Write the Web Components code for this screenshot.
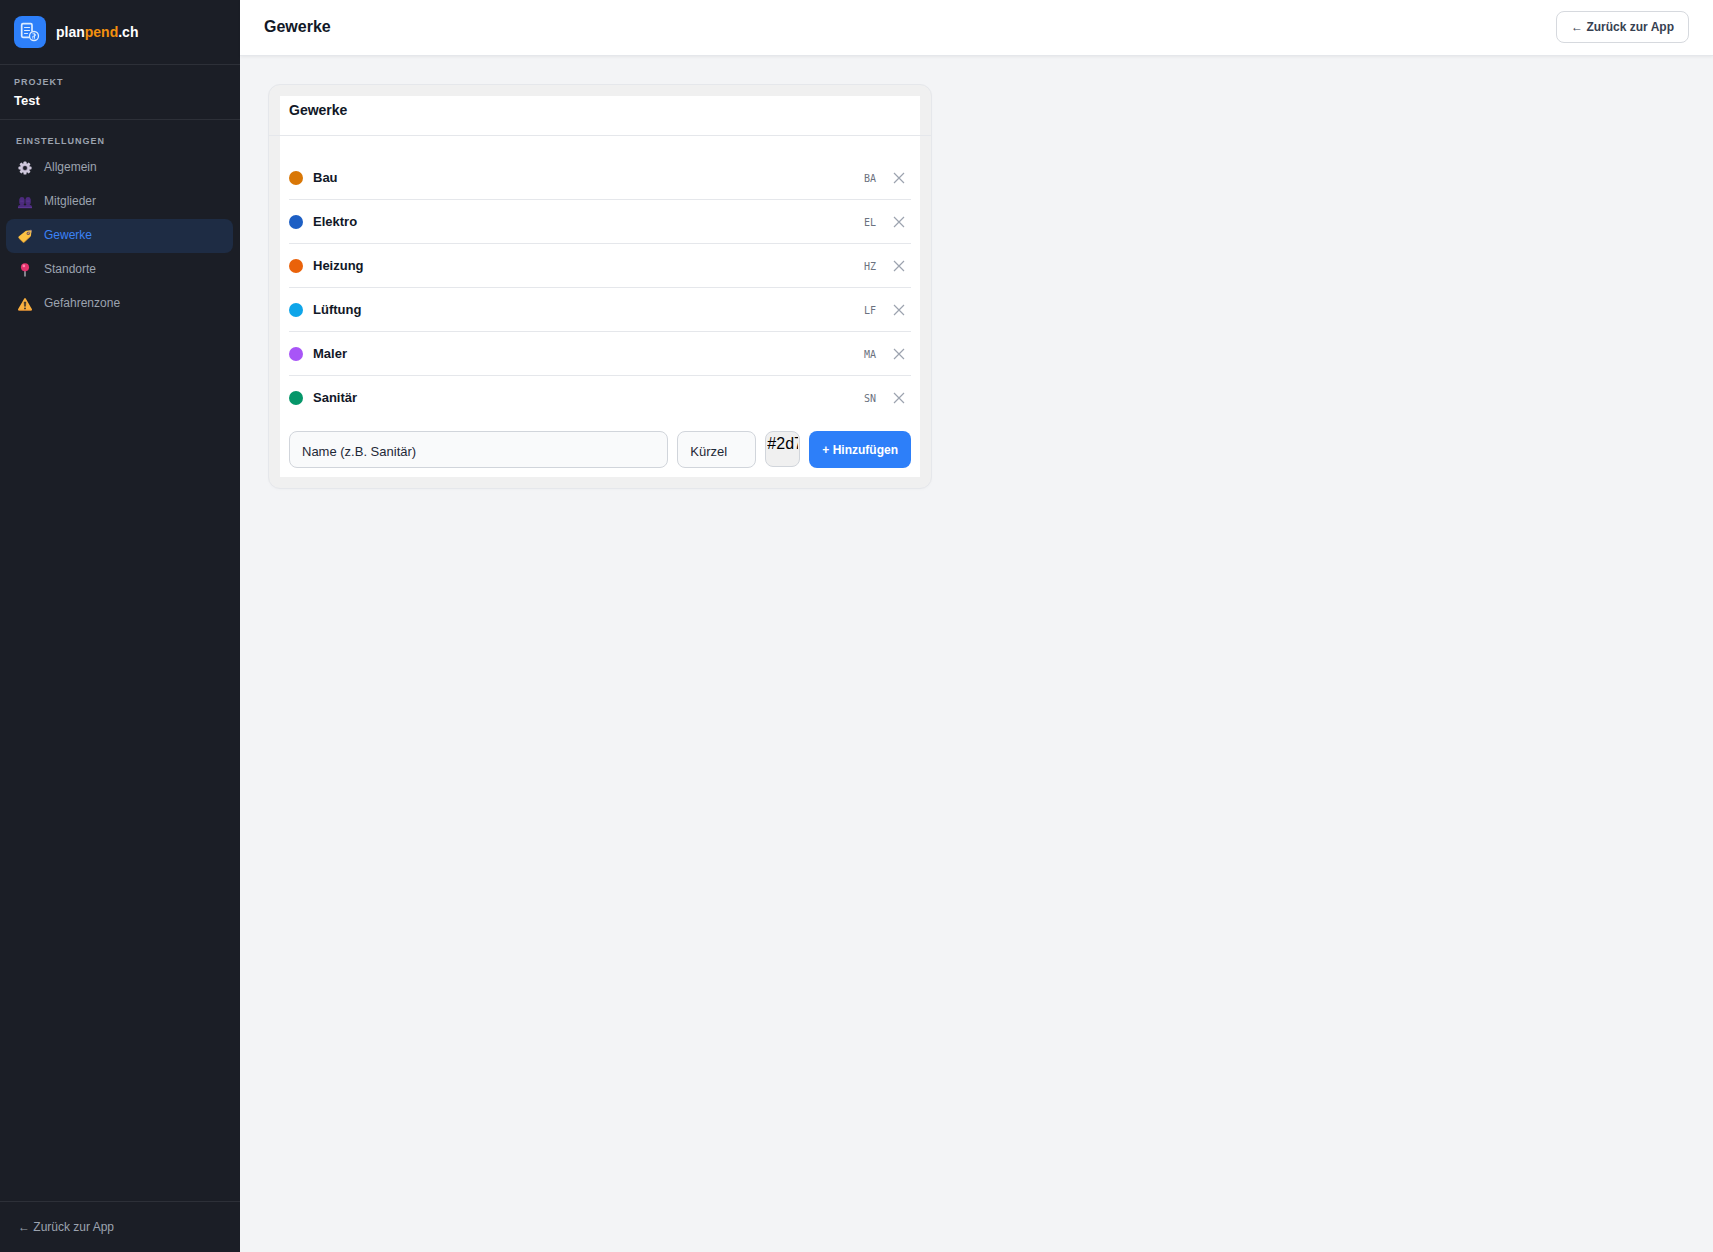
<!DOCTYPE html>
<html lang="de">
<head>
<meta charset="utf-8">
<title>Gewerke – planpend.ch</title>
<style>
  body {
    background: #f3f4f6;
    color: #111827;
    font-family: "Liberation Sans", Arial, sans-serif;
    font-size: 13px;
    margin: 0;
  }
</style>
</head>
<body>
<settings-page>
  <app-sidebar slot="sidebar" project="Test">
    <nav-item icon="gear">Allgemein</nav-item>
    <nav-item icon="people">Mitglieder</nav-item>
    <nav-item icon="tag" active>Gewerke</nav-item>
    <nav-item icon="pin">Standorte</nav-item>
    <nav-item icon="warning">Gefahrenzone</nav-item>
  </app-sidebar>
  <top-bar slot="header">Gewerke</top-bar>
  <settings-card>
    <span slot="title">Gewerke</span>
    <trade-row color="#d97706" code="BA">Bau</trade-row>
    <trade-row color="#1d5fc4" code="EL">Elektro</trade-row>
    <trade-row color="#ea620a" code="HZ">Heizung</trade-row>
    <trade-row color="#0ea5e9" code="LF">Lüftung</trade-row>
    <trade-row color="#a855f7" code="MA">Maler</trade-row>
    <trade-row color="#059669" code="SN">Sanitär</trade-row>
    <trade-form slot="footer"></trade-form>
  </settings-card>
</settings-page>

<script>
// Icons for the navigation
const icons = {
  gear: `
    <g fill="#cfc8dc">
      <circle cx="8" cy="8" r="5.5"/>
      <rect x="6.3" y="0.5" width="3.4" height="15" rx="1"/>
      <rect x="6.3" y="0.5" width="3.4" height="15" rx="1" transform="rotate(45 8 8)"/>
      <rect x="6.3" y="0.5" width="3.4" height="15" rx="1" transform="rotate(90 8 8)"/>
      <rect x="6.3" y="0.5" width="3.4" height="15" rx="1" transform="rotate(135 8 8)"/>
    </g>
    <circle cx="8" cy="8" r="3" fill="#998da8"/>
    <circle cx="8" cy="8" r="2.2" fill="#1b1e26"/>`,
  people: `
    <g fill="#4c2b7d">
      <path d="M1.4 5a3.2 3.6 0 0 1 6.2 0v3.2a3.1 3.2 0 0 1-6.2 0z"/>
      <path d="M8.4 5a3.2 3.6 0 0 1 6.2 0v3.2a3.1 3.2 0 0 1-6.2 0z"/>
      <path d="M3 9h3v3H3zM10 9h3v3h-3z"/>
      <path d="M0 15v-1.500q0-2 2.600-2.300h3.800Q8 11.400 8 12.700q0-1.300 1.600-1.500h3.800q2.600.3 2.600 2.300V15z"/>
    </g>
    <path d="M2.500 7h4M9.500 7h4M0 14.300h16" stroke="#6a3fa5" stroke-width="1" opacity=".6"/>`,
  tag: `
    <path d="M9.300 2.100 14.300 1.500q1 0 1 1l-.4 4.700q-.1.600-.5 1L7.300 14.900q-.9.800-1.800 0L.8 10.300q-.8-.9 0-1.800l7.500-6q.5-.4 1-.4z" fill="#fcc243"/>
    <path d="M.8 10.300 5.500 14.900q.9.800 1.800 0l7-6.500" fill="none" stroke="#e79a2e" stroke-width=".8"/>
    <circle cx="11.700" cy="5" r="1.900" fill="#6d5562"/>
    <circle cx="11.700" cy="5" r=".8" fill="#e8a63a"/>
    <path d="M11.700 5q1-4.200 3.300-3.800 1.300.7-.5 3.600" fill="none" stroke="#a58a83" stroke-width=".9"/>`,
  pin: `
    <path d="M7.100 8h1.800v7.200q-.9.900-1.800 0z" fill="#9ba0a8"/>
    <circle cx="8" cy="4.900" r="4.600" fill="#e5346e"/>
    <path d="M4.300 7.600a4.600 4.600 0 0 0 7.400 0 6 6 0 0 1-7.400 0z" fill="#b71c57"/>
    <circle cx="6.700" cy="3.300" r="1.500" fill="#ff86ac"/>`,
  warning: `
    <path d="M7 2q1-1.700 2 0l6.800 11.700q.7 1.600-.9 1.800H1.100Q-.5 15.300.2 13.700z" fill="#fbb13f"/>
    <path d="M.2 14.600q.3.800.9.900h13.800q.8 0 1-.9z" fill="#e78b33"/>
    <path d="M7 5.700h2l-.4 5H7.400z" fill="#3c332d" stroke="#3c332d" stroke-width=".6"/>
    <circle cx="8" cy="13" r="1.100" fill="#3c332d"/>`
};

class SettingsPage extends HTMLElement {
  constructor() {
    super();
    const shadow = this.attachShadow({mode: 'open'});
    shadow.innerHTML = `
      <style>
        :host {
          display: grid;
          grid-template-columns: 240px 1fr;
          min-height: 100vh;
        }

        .content {
          display: flex;
          flex-direction: column;
          min-width: 0;
        }

        main {
          padding: 28px;
        }
      </style>
      <slot name="sidebar"></slot>
      <div class="content">
        <slot name="header"></slot>
        <main><slot></slot></main>
      </div>`;
  }
}

class AppSidebar extends HTMLElement {
  connectedCallback() {
    const shadow = this.attachShadow({mode: 'open'});
    shadow.innerHTML = `
      <style>
        :host {
          background: #1b1e26;
          color: #9ca3af;
          display: flex;
          flex-direction: column;
        }

        .brand {
          align-items: center;
          border-bottom: 1px solid #2d3038;
          color: #fff;
          display: flex;
          font-size: 14px;
          font-weight: bold;
          gap: 10px;
          padding: 16px 14px;
        }

        .brand svg {
          display: block;
        }

        .brand em {
          color: #f3900f;
          font-style: normal;
        }

        .project {
          border-bottom: 1px solid #2d3038;
          padding: 10px 14px;
        }

        .label {
          font-size: 9px;
          font-weight: bold;
          letter-spacing: 1px;
          line-height: 14px;
          text-transform: uppercase;
        }

        .project strong {
          color: #fff;
          display: block;
          line-height: 16px;
          margin-top: 4px;
        }

        nav {
          flex: 1;
          padding: 14px 7px 14px 6px;
        }

        nav .label {
          padding: 0 10px 3px;
        }

        .back {
          border-top: 1px solid #2d3038;
          padding: 16px 18px;
        }

        a {
          color: inherit;
          font-size: 12px;
          line-height: 18px;
          text-decoration: none;
        }
      </style>
      <div class="brand">
        <svg width="32" height="32" viewBox="0 0 32 32" fill="none" aria-hidden="true">
          <rect width="32" height="32" rx="8" fill="#2d7ff9"/>
          <g stroke="#dcecff" stroke-linecap="round" stroke-linejoin="round">
            <path d="M18 15V9a1.300 1.300 0 0 0-1.300-1.300H9A1.300 1.300 0 0 0 7.700 9v11A1.300 1.300 0 0 0 9 21.300h6" stroke-width="1.700"/>
            <path d="M10.500 11.500h5M10.500 14.500h5M10.500 17.500h3" stroke-width="1.200"/>
            <circle cx="20" cy="20" r="4.500" stroke-width="1.300"/>
            <path d="M18.800 17.800h1.400q1.300 0 1.300 1.200t-1.300 1.200h-1.400v2.200M20.500 17.800v4.600" stroke-width=".9"/>
          </g>
        </svg>
        <span>plan<em>pend</em>.ch</span>
      </div>
      <div class="project">
        <div class="label">Projekt</div>
        <strong></strong>
      </div>
      <nav>
        <div class="label">Einstellungen</div>
        <slot></slot>
      </nav>
      <div class="back"><a href="#app">← Zurück zur App</a></div>`;
    shadow.querySelector('strong').textContent = this.getAttribute('project');
  }
}

class NavItem extends HTMLElement {
  connectedCallback() {
    const shadow = this.attachShadow({mode: 'open'});
    shadow.innerHTML = `
      <style>
        :host {
          display: block;
        }

        a {
          align-items: center;
          border-radius: 8px;
          color: #9ca3af;
          display: flex;
          font-size: 12px;
          gap: 12px;
          line-height: 14px;
          padding: 9px 12px 11px;
          text-decoration: none;
        }

        svg {
          height: 14px;
          margin-bottom: -2px;
          width: 14px;
        }

        :host([active]) a {
          background: #1e2c44;
          color: #3b82f6;
        }
      </style>
      <a href="#"><svg viewBox="0 0 16 16" aria-hidden="true">${icons[this.getAttribute('icon')]}</svg><slot></slot></a>`;
  }
}

class TopBar extends HTMLElement {
  constructor() {
    super();
    const shadow = this.attachShadow({mode: 'open'});
    shadow.innerHTML = `
      <style>
        :host {
          align-items: center;
          background: #fff;
          border-bottom: 1px solid #e5e7eb;
          box-shadow: 0 1px 3px rgba(0, 0, 0, 0.06);
          display: flex;
          justify-content: space-between;
          padding: 11px 24px 12px;
        }

        h1 {
          font-size: 16px;
          line-height: 20px;
          margin: 0;
        }

        a {
          border: 1px solid #d6d9de;
          border-radius: 8px;
          color: #374151;
          font-size: 12px;
          font-weight: bold;
          line-height: 16px;
          padding: 7px 14px;
          text-decoration: none;
        }
      </style>
      <h1><slot></slot></h1>
      <a href="#app">← Zurück zur App</a>`;
  }
}

class SettingsCard extends HTMLElement {
  constructor() {
    super();
    const shadow = this.attachShadow({mode: 'open'});
    shadow.innerHTML = `
      <style>
        :host {
          background: linear-gradient(#fff, #fff) content-box, #f0f0f0;
          border: 1px solid #e5e7eb;
          border-radius: 12px;
          box-shadow: 0 1px 3px rgba(0, 0, 0, 0.02);
          display: block;
          max-width: 640px;
          padding: 11px;
        }

        h2 {
          border-bottom: 1px solid #e5e7eb;
          font-size: 14px;
          line-height: 18px;
          margin: 0 -11px;
          padding: 5px 20px 16px;
        }

        .body {
          padding: 20px 9px 9px;
        }
      </style>
      <h2><slot name="title"></slot></h2>
      <div class="body">
        <slot></slot>
        <slot name="footer"></slot>
      </div>`;
  }
}

class TradeRow extends HTMLElement {
  connectedCallback() {
    const shadow = this.attachShadow({mode: 'open'});
    shadow.innerHTML = `
      <style>
        :host {
          align-items: center;
          border-bottom: 1px solid #e5e7eb;
          display: flex;
          gap: 10px;
          height: 43px;
        }

        :host(:last-of-type) {
          border-bottom: 0;
        }

        .dot {
          background: var(--trade-color);
          border-radius: 50%;
          height: 14px;
          width: 14px;
        }

        .name {
          flex: 1;
          font-weight: bold;
        }

        code {
          color: #6b7280;
          font-family: "DejaVu Sans Mono", monospace;
          font-size: 10px;
          padding-top: 2px;
        }

        button {
          background: none;
          border: 0;
          color: #9ca3af;
          display: flex;
          padding: 6px 6px 6px 7px;
        }
      </style>
      <span class="dot"></span>
      <span class="name"><slot></slot></span>
      <code></code>
      <button type="button" aria-label="Entfernen">
        <svg width="12" height="12" viewBox="0 0 12 12" aria-hidden="true">
          <path d="M1 1l10 10M11 1L1 11" stroke="currentColor" stroke-width="1.200"/>
        </svg>
      </button>`;
    this.style.setProperty('--trade-color', this.getAttribute('color'));
    shadow.querySelector('code').textContent = this.getAttribute('code');
  }
}

class TradeForm extends HTMLElement {
  constructor() {
    super();
    const shadow = this.attachShadow({mode: 'open'});
    shadow.innerHTML = `
      <style>
        :host {
          display: block;
          padding-top: 12px;
        }

        form {
          align-items: flex-start;
          display: flex;
          gap: 9px;
        }

        input {
          background: #f9fafb;
          border: 1px solid #d1d5db;
          border-radius: 8px;
          box-sizing: border-box;
          color: #111827;
          font: inherit;
          height: 37px;
          padding: 4px 12px 0;
        }

        input::placeholder {
          color: #1f2937;
          opacity: 1;
        }

        .name {
          flex: 1;
          min-width: 0;
        }

        .code {
          width: 79px;
        }

        .color {
          background: #f0f0f0;
          color: #000;
          font-size: 16px;
          height: 36px;
          padding: 0 1px 10px;
          width: 35px;
        }

        button {
          background: #2d7ff9;
          border: 0;
          border-radius: 8px;
          color: #fff;
          font: inherit;
          font-size: 12px;
          font-weight: bold;
          height: 37px;
          padding: 0 13px;
        }
      </style>
      <form>
        <input class="name" type="text" placeholder="Name (z.B. Sanitär)" aria-label="Name">
        <input class="code" type="text" placeholder="Kürzel" aria-label="Kürzel">
        <input class="color" type="text" value="#2d7ff9" aria-label="Farbe">
        <button type="button">+ Hinzufügen</button>
      </form>`;
  }
}

customElements.define('settings-page', SettingsPage);
customElements.define('app-sidebar', AppSidebar);
customElements.define('nav-item', NavItem);
customElements.define('top-bar', TopBar);
customElements.define('settings-card', SettingsCard);
customElements.define('trade-row', TradeRow);
customElements.define('trade-form', TradeForm);
</script>
</body>
</html>
